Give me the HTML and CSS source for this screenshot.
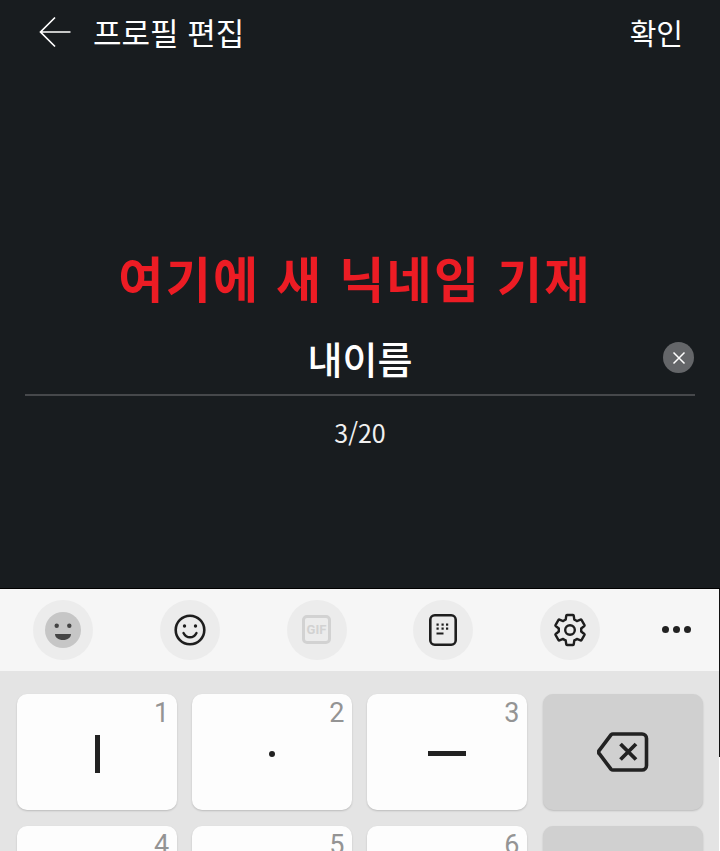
FILE: index.html
```html
<!DOCTYPE html>
<html lang="ko">
<head>
    <meta charset="UTF-8">
    <meta name="viewport" content="width=device-width, initial-scale=1.0">
    <title>프로필 편집</title>
    <link rel="stylesheet" href="styles.css">
</head>
<body>
    <div class="screen">
        <header class="topbar">
            <svg class="back" width="32" height="32" viewBox="0 0 32 32">
                <path d="M16 1.500 1.500 16 16 30.500M1.500 16H31.500" />
            </svg>
            <div class="title">프로필 편집</div>
            <div class="confirm">확인</div>
        </header>

        <main class="editor">
            <h1 class="hint">여기에 새 닉네임 기재</h1>
            <div class="name-row">
                <div class="name">내이름</div>
                <div class="clear">
                    <svg width="14" height="14" viewBox="0 0 14 14">
                        <path d="M1.500 1.500 12.500 12.500M12.500 1.500 1.500 12.500" />
                    </svg>
                </div>
            </div>
            <div class="counter">3/20</div>
        </main>

        <section class="keyboard">
            <div class="toolbar">
                <div class="tool">
                    <svg width="36" height="36" viewBox="0 0 36 36">
                        <circle cx="18" cy="18" r="18" fill="#c6c6c6" />
                        <circle cx="11.700" cy="13.700" r="2.200" fill="#444" />
                        <circle cx="24.300" cy="13.700" r="2.200" fill="#444" />
                        <path d="M10 22h16c0 3.500-3.300 6-8 6s-8-2.500-8-6z" fill="#444" />
                    </svg>
                </div>
                <div class="tool">
                    <svg width="34" height="34" viewBox="0 0 34 34">
                        <circle cx="17" cy="17" r="14.300" fill="none" stroke="#1e1e1e" stroke-width="2.600" />
                        <circle cx="11.500" cy="13" r="1.700" fill="#1e1e1e" />
                        <circle cx="22.500" cy="13" r="1.700" fill="#1e1e1e" />
                        <path d="M10.500 20c1.500 3 3.800 4.300 6.500 4.300s5-1.300 6.500-4.300" fill="none" stroke="#1e1e1e" stroke-width="2.400" stroke-linecap="round" />
                    </svg>
                </div>
                <div class="tool">
                    <div class="gif">GIF</div>
                </div>
                <div class="tool">
                    <svg width="28" height="32" viewBox="0 0 28 32">
                        <rect x="1.300" y="1.300" width="25.400" height="29.400" rx="4.500" fill="none" stroke="#1e1e1e" stroke-width="2.600" />
                        <g fill="#1e1e1e">
                            <rect x="7.500" y="9.500" width="2.200" height="2.200" /><rect x="12.500" y="9.500" width="2.200" height="2.200" /><rect x="17" y="9.500" width="2.200" height="2.200" />
                            <rect x="7.500" y="13.500" width="2.200" height="2.200" /><rect x="12.500" y="13.500" width="2.200" height="2.200" /><rect x="17" y="13.500" width="2.200" height="2.200" />
                            <rect x="7.500" y="18.500" width="7" height="2" />
                        </g>
                    </svg>
                </div>
                <div class="tool">
                    <svg width="36" height="36" viewBox="0 0 24 24">
                        <path d="M19.430 12.980c.04-.32.07-.64.07-.98 0-.34-.03-.66-.07-.98l2.110-1.650c.19-.15.24-.42.12-.64l-2-3.460c-.09-.16-.26-.25-.44-.25-.06 0-.12.01-.17.03l-2.490 1c-.52-.4-1.080-.73-1.690-.98l-.38-2.650C14.460 2.180 14.250 2 14 2h-4c-.25 0-.46.18-.49.42l-.38 2.650c-.61.25-1.170.59-1.690.98l-2.490-1c-.06-.02-.12-.03-.18-.03-.17 0-.34.09-.43.25l-2 3.460c-.13.22-.07.49.12.64l2.110 1.650c-.04.32-.07.65-.07.98 0 .33.03.66.07.98l-2.110 1.650c-.19.15-.24.42-.12.64l2 3.460c.09.16.26.25.44.25.06 0 .12-.01.17-.03l2.490-1c.52.4 1.080.73 1.690.98l.38 2.650c.03.24.24.42.49.42h4c.25 0 .46-.18.49-.42l.38-2.650c.61-.25 1.170-.59 1.690-.98l2.490 1c.06.02.12.03.18.03.17 0 .34-.09.43-.25l2-3.460c.12-.22.07-.49-.12-.64l-2.110-1.650z" fill="none" stroke="#1e1e1e" stroke-width="1.600" stroke-linejoin="round" />
                        <circle cx="12" cy="12" r="3.200" fill="none" stroke="#1e1e1e" stroke-width="1.600" />
                    </svg>
                </div>
                <div class="tool tool-plain">
                    <span class="dot"></span><span class="dot"></span><span class="dot"></span>
                </div>
            </div>

            <div class="keys">
                <div class="key key-mark">
                    <span class="num">1</span>
                    <span class="mark-bar"></span>
                </div>
                <div class="key key-mark">
                    <span class="num">2</span>
                    <span class="mark-dot"></span>
                </div>
                <div class="key key-mark">
                    <span class="num">3</span>
                    <span class="mark-dash"></span>
                </div>
                <div class="key key-gray">
                    <svg width="52" height="40" viewBox="0 0 52 40">
                        <path d="M16 2h29a4.500 4.500 0 0 1 4.500 4.500v27a4.500 4.500 0 0 1-4.500 4.500H16a3 3 0 0 1-2-.8L2.500 22a3 3 0 0 1 0-4L14 2.800A3 3 0 0 1 16 2z" fill="none" stroke="#222" stroke-width="3.600" />
                        <path d="M23.500 12 39 27.500M39 12 23.500 27.500" fill="none" stroke="#222" stroke-width="3.800" />
                    </svg>
                </div>
                <div class="key"><span class="num">4</span></div>
                <div class="key"><span class="num">5</span></div>
                <div class="key"><span class="num">6</span></div>
                <div class="key key-gray"></div>
            </div>
        </section>
    </div>
</body>
</html>
```

FILE: styles.css
```css
* {
    box-sizing: border-box;
}

html, body {
    margin: 0;
    height: 100%;
    background: #fff;
}

.screen {
    width: 720px;
    height: 851px;
    overflow: hidden;
    display: flex;
    flex-direction: column;
    background: #181c1f;
    color: #fff;
    font-family: "Noto Sans CJK KR", "Noto Sans", sans-serif;
}

.topbar {
    height: 64px;
    display: flex;
    align-items: center;
    padding: 0 37px 0 39px;
    flex: none;
}

.back {
    fill: none;
    stroke: #fff;
    stroke-width: 1.700;
    flex: none;
}

.title {
    margin-left: 22px;
    font-size: 31px;
    font-weight: 400;
    line-height: 62px;
    flex: 1;
}

.confirm {
    font-size: 29px;
    line-height: 62px;
}

.editor {
    height: 525px;
    flex: none;
    padding: 0 25px;
    display: flex;
    flex-direction: column;
    align-items: stretch;
    border-bottom: 1px solid #000;
}

.hint {
    margin: 180px 10px 0 0;
    color: #ec1c24;
    font-size: 49px;
    font-weight: 700;
    line-height: 66px;
    letter-spacing: 2.200px;
    text-align: center;
}

.name-row {
    height: 65px;
    margin-top: 21px;
    border-bottom: 2px solid #46484b;
    display: flex;
    align-items: center;
    justify-content: center;
    position: relative;
    padding-bottom: 10px;
}

.name {
    font-size: 38px;
    font-weight: 500;
    line-height: 50px;
}

.clear {
    position: absolute;
    right: 1px;
    top: 11px;
    width: 31px;
    height: 31px;
    border-radius: 50%;
    background: #646669;
    display: flex;
    align-items: center;
    justify-content: center;
}

.clear path {
    fill: none;
    stroke: #fff;
    stroke-width: 1.500;
}

.counter {
    margin-top: 18px;
    font-size: 25px;
    line-height: 36px;
    text-align: center;
    color: #f0f0f0;
}

.keyboard {
    flex: 1;
    position: relative;
    background: #e4e4e4;
}

/* 1px strip on the right edge of the screenshot */
.keyboard::before {
    content: "";
    position: absolute;
    top: 0;
    right: 0;
    width: 1px;
    height: 168px;
    background: #111;
}

.keyboard::after {
    content: "";
    position: absolute;
    top: 168px;
    right: 0;
    bottom: 0;
    width: 1px;
    background: #fff;
}

.toolbar {
    height: 82px;
    background: #f6f6f6;
    display: flex;
    align-items: center;
    gap: 66.750px;
    padding: 0 0 1px 33px;
}

.tool {
    width: 60px;
    height: 60px;
    border-radius: 50%;
    background: #ececec;
    display: flex;
    align-items: center;
    justify-content: center;
    flex: none;
}

.tool-plain {
    background: none;
    gap: 4px;
    margin-left: -20px;
}

.dot {
    width: 7px;
    height: 7px;
    border-radius: 50%;
    background: #222;
}

.gif {
    width: 29px;
    height: 29px;
    border: 3px solid #d2d2d2;
    border-radius: 5px;
    color: #d2d2d2;
    font-family: "Roboto", sans-serif;
    font-size: 13px;
    font-weight: 700;
    line-height: 23px;
    text-align: center;
}

.keys {
    display: grid;
    grid-template-columns: repeat(4, 160px);
    grid-auto-rows: 116px;
    column-gap: 15.100px;
    row-gap: 16px;
    padding: 23px 0 0 17.300px;
}

.key {
    position: relative;
    background: #fdfdfd;
    border-radius: 10px;
    box-shadow: 0 1px 2px rgba(0, 0, 0, .18);
    display: flex;
    align-items: center;
    justify-content: center;
}

.key-mark {
    padding-top: 3px;
}

.key-gray {
    background: #d0d0d0;
}

.num {
    position: absolute;
    top: 2px;
    right: 8px;
    color: #949494;
    font-family: "Roboto", sans-serif;
    font-size: 27px;
    line-height: 34px;
}

.mark-bar {
    width: 5px;
    height: 38px;
    background: #222;
}

.mark-dot {
    width: 6px;
    height: 6px;
    border-radius: 50%;
    background: #222;
}

.mark-dash {
    width: 38px;
    height: 5px;
    background: #222;
}
```
